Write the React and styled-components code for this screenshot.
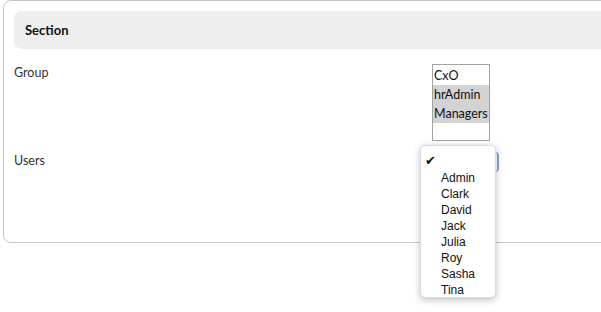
import React from 'react';
import styled, { createGlobalStyle } from 'styled-components';

const GlobalStyle = createGlobalStyle`
  html, body {
    margin: 0;
    padding: 0;
    background: #ffffff;
    overflow: hidden;
  }
  body {
    font-family: Lato, 'Open Sans', sans-serif;
    color: #222;
  }
`;

const groups = [
  { name: 'CxO', selected: false },
  { name: 'hrAdmin', selected: true },
  { name: 'Managers', selected: true },
];

const users = ['Admin', 'Clark', 'David', 'Jack', 'Julia', 'Roy', 'Sasha', 'Tina'];

const App = () => {
  return (
    <Page>
      <GlobalStyle />
      <Panel>
        <Header>Section</Header>
        <Row $height={88}>
          <Label>Group</Label>
          <ListBox>
            {groups.map((g) => (
              <ListItem key={g.name} $selected={g.selected}>
                {g.name}
              </ListItem>
            ))}
          </ListBox>
        </Row>
        <Row $height={60}>
          <Label>Users</Label>
          <SelectHolder>
            <ClosedSelect />
            <Popup>
              <MenuItem>
                <Check>✔</Check>
              </MenuItem>
              {users.map((u) => (
                <MenuItem key={u}>{u}</MenuItem>
              ))}
            </Popup>
          </SelectHolder>
        </Row>
      </Panel>
    </Page>
  );
};

const Page = styled.div`
  width: 601px;
  height: 312px;
  padding-left: 3px;
  box-sizing: border-box;
  overflow: hidden;
`;

const Panel = styled.div`
  width: 680px;
  height: 243px;
  box-sizing: border-box;
  border: 1px solid #c6c6c6;
  border-radius: 8px;
  padding: 10px 10px 0;
`;

const Header = styled.div`
  height: 38px;
  background: #eeeeee;
  border-radius: 8px;
  padding-left: 11px;
  display: flex;
  align-items: center;
  font-size: 13px;
  font-weight: 700;
  color: #111;
`;

const Row = styled.div`
  display: grid;
  grid-template-columns: 418px auto;
  height: ${(p) => p.$height}px;
  padding-top: 15px;
  box-sizing: border-box;
`;

const Label = styled.div`
  font-size: 12.5px;
  line-height: 17px;
  color: #333;
`;

const ListBox = styled.div`
  width: 58px;
  height: 77px;
  box-sizing: border-box;
  border: 1px solid #a3a3a3;
  padding-top: 1px;
  background: #fff;
  overflow: hidden;
`;

const ListItem = styled.div`
  height: 19px;
  line-height: 19px;
  font-size: 12.5px;
  padding-left: 1px;
  color: #111;
  white-space: nowrap;
  background: ${(p) => (p.$selected ? '#d3d3d3' : 'transparent')};
`;

const SelectHolder = styled.div`
  position: relative;
  width: 65px;
  height: 20px;
`;

const ClosedSelect = styled.div`
  position: absolute;
  left: 0;
  top: 0;
  width: 65px;
  height: 20px;
  border-radius: 4px;
  border-right: 2px solid #7ea7e0;
`;

const Popup = styled.div`
  position: absolute;
  left: -12px;
  top: -7px;
  width: 76px;
  height: 153px;
  box-sizing: border-box;
  background: #fff;
  border: 1px solid #dcdcdc;
  border-radius: 5px;
  box-shadow: 0 2px 7px rgba(0, 0, 0, 0.25);
  padding-top: 8px;
  font-family: 'Liberation Sans', Arial, sans-serif;
`;

const MenuItem = styled.div`
  position: relative;
  height: 16px;
  line-height: 16px;
  font-size: 12px;
  padding-left: 20px;
  color: #111;
`;

const Check = styled.span`
  position: absolute;
  left: 4px;
  top: -1px;
  font-family: 'DejaVu Sans', sans-serif;
  font-size: 13px;
`;

export default App;
